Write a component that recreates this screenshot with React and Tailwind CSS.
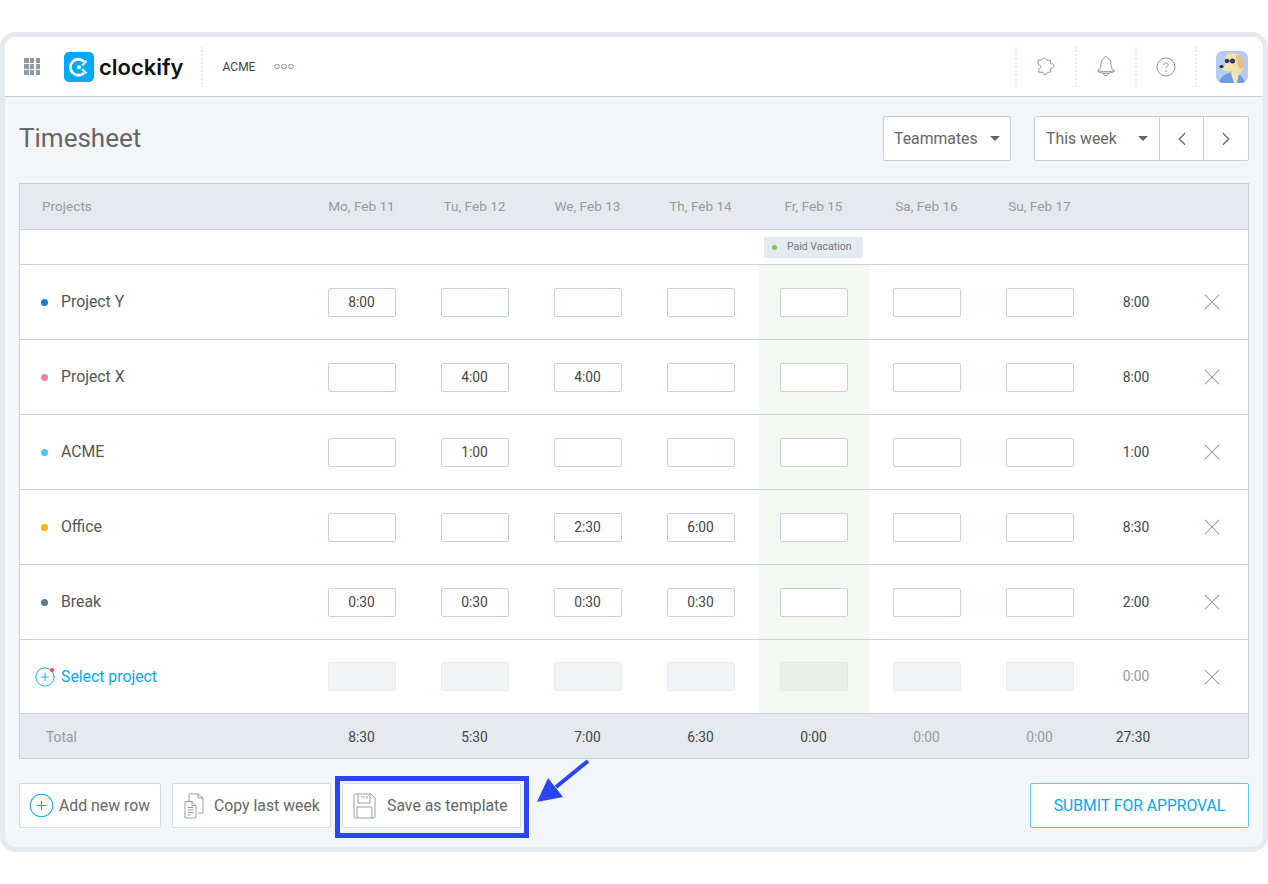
import React from 'react';
import { ChevronLeft, ChevronRight, X, CirclePlus } from 'lucide-react';

const days = ['Mo, Feb 11', 'Tu, Feb 12', 'We, Feb 13', 'Th, Feb 14', 'Fr, Feb 15', 'Sa, Feb 16', 'Su, Feb 17'];

const rows = [
  { name: 'Project Y', dot: 'bg-[#0b83d9]', hours: ['8:00', '', '', '', '', '', ''], total: '8:00' },
  { name: 'Project X', dot: 'bg-[#f27ea5]', hours: ['', '4:00', '4:00', '', '', '', ''], total: '8:00' },
  { name: 'ACME', dot: 'bg-[#4fc3f7]', hours: ['', '1:00', '', '', '', '', ''], total: '1:00' },
  { name: 'Office', dot: 'bg-[#ffb300]', hours: ['', '', '2:30', '6:00', '', '', ''], total: '8:30' },
  { name: 'Break', dot: 'bg-[#607d8b]', hours: ['0:30', '0:30', '0:30', '0:30', '', '', ''], total: '2:00' },
];

const totals = ['8:30', '5:30', '7:00', '6:30', '0:00', '0:00', '0:00'];

const gridCols = 'grid grid-cols-[285px_repeat(7,113px)_80px_1fr]';

const Separator = () => <div className="h-10 border-l-2 border-dotted border-[#e8ecef]" />;

const Caret = () => <span className="h-0 w-0 border-x-[5px] border-t-[5px] border-x-transparent border-t-[#666]" />;

const Logo = () => (
  <div className="flex items-center gap-[5px]">
    <svg width="30" height="30" viewBox="0 0 30 30">
      <rect width="30" height="30" rx="5" fill="#03a9f4" />
      <path d="M20 9.500a8 8 0 1 0 0 11.500" fill="none" stroke="#fff" strokeWidth="2.800" />
      <circle cx="15" cy="15.200" r="2" fill="#fff" />
      <path d="M18 13.500l4.500-4.500M18 17l4.500 4.500" stroke="#cdeffd" strokeWidth="2.400" />
    </svg>
    <span className="font-['Inter',sans-serif] text-[22px] font-semibold leading-none text-[#111]">clockify</span>
  </div>
);

const PuzzleIcon = () => (
  <svg width="20" height="20" viewBox="0 0 20 20" fill="none" stroke="#8a9699" strokeWidth="1">
    <path d="M2 3h3.800c.8 0 .5-.8 1-1.300 1-1 3-.8 3.500.3.300.7-.1 1.300.7 1.300h3.700v3c0 .8.800.4 1.500.5 1.800.3 2.400 2.700 1.100 3.800-.8.700-2.600.1-2.600 1v3.600h-3.200c-.8 0-.3.800-.7 1.400-.8 1.200-3 1.300-3.700.1-.4-.7.100-1.500-.7-1.500H2.800v-3c0-.8.700-.4 1.200-.8 1-.9.900-2.600-.2-3.300C3.200 7.700 2 8 2 7.300z" />
  </svg>
);

const BellIcon = () => (
  <svg width="20" height="23" viewBox="0 0 20 23" fill="none" stroke="#8a9699" strokeWidth="1">
    <path d="M10 1.500c-.9 0-1.400.7-1.400 1.500C5.800 4 5 6.500 5 9.500c0 3-1.200 5-3.500 6.500 1.300 1.500 4.600 2.200 8.500 2.200s7.200-.7 8.500-2.200C16.200 14.500 15 12.500 15 9.500c0-3-.8-5.500-3.600-6.500 0-.8-.5-1.500-1.400-1.500z" />
    <path d="M7.500 18.200c.2 1.500 1.200 2.400 2.500 2.400s2.300-.9 2.500-2.400M1.800 15.500c2 1.500 14.400 1.500 16.400 0" />
  </svg>
);

const HelpIcon = () => (
  <svg width="20" height="20" viewBox="0 0 20 20" fill="none" stroke="#8a9699" strokeWidth="1">
    <circle cx="10" cy="10" r="9" />
    <path d="M7.800 8c0-1.300 1-2.100 2.200-2.100s2.200.8 2.200 2c0 1.600-2.200 1.700-2.200 3.500" />
    <circle cx="10" cy="14" r="0.400" />
  </svg>
);

const Avatar = () => (
  <svg width="32" height="32" viewBox="0 0 32 32" className="rounded-[7px]">
    <rect width="32" height="32" fill="#b5cbf0" />
    <path d="M3 32c1-6 6-10 13-10s12 4 13 10z" fill="#6f9de8" />
    <path d="M15 22l3 10h3l2-10z" fill="#f6e8bd" />
    <path d="M11 3.500c5-2.500 13-1.500 14.500 4 1 4 2.500 9 .5 12-1 3-3.500 5-7 5-2 0-3-2-3-4.500-3 1-7 .5-9.500-1.500-1-1.500 0-3 2.500-3.500.5-1 0-2.500 0-4 0-3 .5-6 2-7.500z" fill="#f5e2ab" />
    <path d="M20 4c4-.5 7.500 4 7.500 9 0 3.500-2 5.500-3.500 5-2.500-3-4-9-4-14z" fill="#e0c283" />
    <circle cx="11" cy="10" r="2.200" fill="#2a3558" />
    <circle cx="16.500" cy="10" r="2.500" fill="#2a3558" />
    <path d="M13 10h2" stroke="#2a3558" strokeWidth="1" />
    <ellipse cx="5.500" cy="15.500" rx="2" ry="1.500" fill="#222" />
  </svg>
);

const Header = () => (
  <header className="flex h-[60px] shrink-0 items-center border-b border-[#c6d2d9] bg-white">
    <div className="ml-[19px] grid w-[16px] grid-cols-3 gap-[1.500px]">
      {Array.from({ length: 9 }).map((_, i) => (
        <span key={i} className="h-[4.500px] w-[4.500px] bg-[#8b9aa3]" />
      ))}
    </div>
    <div className="ml-[24px]"><Logo /></div>
    <div className="ml-[17px]"><Separator /></div>
    <span className="ml-[20px] text-[12px] text-[#444]">ACME</span>
    <div className="ml-[19px] flex gap-[1.500px]">
      {[0, 1, 2].map((i) => (
        <span key={i} className="h-[5.500px] w-[5.500px] rounded-full border border-[#8a9699]" />
      ))}
    </div>
    <div className="ml-auto flex items-center">
      <Separator />
      <div className="flex w-[58px] justify-center"><PuzzleIcon /></div>
      <Separator />
      <div className="flex w-[58px] justify-center"><BellIcon /></div>
      <Separator />
      <div className="flex w-[58px] justify-center"><HelpIcon /></div>
      <Separator />
      <div className="ml-[19px] mr-[15px]"><Avatar /></div>
    </div>
  </header>
);

const Toolbar = () => (
  <div className="flex items-center justify-between pl-[14px] pr-[14px] pt-[19px]">
    <h1 className="mb-[2px] text-[26px] font-normal leading-none text-[#666]">Timesheet</h1>
    <div className="flex">
      <button className="flex h-[45px] w-[128px] items-center justify-between rounded-[2px] border border-[#c6d2d9] bg-white pl-[10px] pr-[10px] text-[15.800px] text-[#666]">
        Teammates <Caret />
      </button>
      <div className="ml-[23px] flex h-[45px] rounded-[2px] border border-[#c6d2d9] bg-white text-[15.800px] text-[#666]">
        <button className="flex w-[124px] items-center justify-between pl-[11px] pr-[11px]">This week <Caret /></button>
        <button className="flex w-[44px] items-center justify-center border-l border-[#c6d2d9]"><ChevronLeft size={22} strokeWidth={1.300} /></button>
        <button className="flex w-[45px] items-center justify-center border-l border-[#c6d2d9]"><ChevronRight size={22} strokeWidth={1.300} /></button>
      </div>
    </div>
  </div>
);

const TimeInput = ({ value, disabled, shaded }) => {
  let tone = 'border-[#c6d2d9] bg-white';
  if (disabled) tone = shaded ? 'border-[#e2e8e2] bg-[#ebf0ea]' : 'border-[#e8ecef] bg-[#f2f5f7]';
  return (
    <div className={`flex h-[29px] w-[68px] items-center justify-center rounded-[2px] border text-[13.800px] text-[#444] ${tone}`}>
      {value}
    </div>
  );
};

const DayCell = ({ index, children }) => (
  <div className="flex justify-center">
    <div className={`flex w-[110px] items-center justify-center ${index === 4 ? 'bg-[#f3f9f0]' : ''}`}>{children}</div>
  </div>
);

const Row = ({ row }) => (
  <div className={`${gridCols} h-[75px] border-b border-[#c6d2d9] bg-white`}>
    <div className="flex items-center pl-[21px] text-[15.800px] text-[#555]">
      <span className={`mr-[13px] h-[7px] w-[7px] rounded-full ${row.dot}`} />
      {row.name}
    </div>
    {row.hours.map((h, i) => (
      <DayCell key={i} index={i}><TimeInput value={h} /></DayCell>
    ))}
    <div className="flex items-center justify-center text-[13.800px] text-[#444]">{row.total}</div>
    <div className="flex items-center justify-center"><X size={28} strokeWidth={0.900} color="#8a9699" /></div>
  </div>
);

const Table = () => (
  <div className="mt-[22px] ml-[14px] mr-[14px] border border-[#c6d2d9]">
    <div className={`${gridCols} h-[46px] border-b border-[#c6d2d9] bg-[#e4eaf0] text-[13.600px] text-[#999]`}>
      <div className="flex items-center pl-[22px]">Projects</div>
      {days.map((d) => (
        <div key={d} className="flex items-center justify-center">{d}</div>
      ))}
    </div>
    <div className={`${gridCols} h-[35px] border-b border-[#c6d2d9] bg-white`}>
      <div />
      {days.map((d, i) => (
        <div key={d} className="flex items-center justify-center">
          {i === 4 && (
            <span className="flex h-[21px] w-[99px] items-center rounded-[2px] bg-[#e4eaf0] pl-[8px] text-[10.500px] text-[#777]">
              <span className="mr-[10px] h-[5px] w-[5px] rounded-full bg-[#8bc34a]" />
              Paid Vacation
            </span>
          )}
        </div>
      ))}
    </div>
    {rows.map((r) => (
      <Row key={r.name} row={r} />
    ))}
    <div className={`${gridCols} h-[74px] border-b border-[#c6d2d9] bg-white`}>
      <div className="flex items-center pl-[14px] text-[15.800px] text-[#03a9f4]">
        <span className="relative mr-[5px] flex">
          <CirclePlus size={22} strokeWidth={1} color="#03a9f4" />
          <span className="absolute right-[2px] top-[2px] h-[4px] w-[4px] rounded-full bg-[#f44336]" />
        </span>
        Select project
      </div>
      {days.map((d, i) => (
        <DayCell key={d} index={i}><TimeInput disabled shaded={i === 4} /></DayCell>
      ))}
      <div className="flex items-center justify-center text-[13.800px] text-[#999]">0:00</div>
      <div className="flex items-center justify-center"><X size={28} strokeWidth={0.900} color="#8a9699" /></div>
    </div>
    <div className={`${gridCols} h-[44px] bg-[#e4eaf0] pt-[2px] text-[13.800px] text-[#444]`}>
      <div className="flex items-center pl-[26px] text-[#999]">Total</div>
      {totals.map((t, i) => (
        <div key={i} className={`flex items-center justify-center ${i > 4 ? 'text-[#999]' : ''}`}>{t}</div>
      ))}
      <div className="flex items-center justify-center pr-[6px]">27:30</div>
      <div />
    </div>
  </div>
);

const CopyIcon = () => (
  <svg width="20" height="26" viewBox="0 0 20 26" fill="none" stroke="#8a9699" strokeWidth="0.900">
    <path d="M1 8.500h7l4 4V25H1z" />
    <path d="M8 8.500v4h4M3.500 14.500h6M3.500 17h6M3.500 19.500h6M3.500 22h3" />
    <path d="M5 8.500V1h9.500M14 1l5 4v15h-5M14 1v4h5" />
  </svg>
);

const SaveIcon = () => (
  <svg width="23" height="26" viewBox="0 0 23 26" fill="none" stroke="#8a9699" strokeWidth="0.900">
    <path d="M2.500 1H18l4 4v18.500a1.500 1.500 0 0 1-1.500 1.500h-18A1.500 1.500 0 0 1 1 23.500v-21A1.500 1.500 0 0 1 2.500 1z" />
    <path d="M5 1v9h12V1M4 25V14h15v11M8 4h4M14 3v3" />
  </svg>
);

const Footer = () => (
  <div className="flex items-center justify-between pl-[14px] pr-[14px] pt-[24px]">
    <div className="flex gap-[11px] text-[15.800px] text-[#666]">
      <button className="flex h-[45px] w-[142px] items-center rounded-[2px] border border-[#d3dce1] bg-white pl-[8px]">
        <CirclePlus size={27} strokeWidth={0.900} color="#03a9f4" className="mr-[4px]" /> Add new row
      </button>
      <button className="flex h-[45px] w-[159px] items-center rounded-[2px] border border-[#d3dce1] bg-white pl-[11px]">
        <span className="mr-[10px] flex"><CopyIcon /></span> Copy last week
      </button>
      <div className="relative">
        <button className="flex h-[45px] w-[179px] items-center rounded-[2px] border border-[#d3dce1] bg-white pl-[10px]">
          <span className="mr-[11px] flex"><SaveIcon /></span> Save as template
        </button>
        <span className="absolute -bottom-[10px] -left-[7px] -right-[8px] -top-[7px] border-[5px] border-[#2b45f5]" />
        <svg width="60" height="50" viewBox="0 0 60 50" className="absolute -top-[25px] left-[192px]">
          <path d="M54 3L22 29" stroke="#2b45f5" strokeWidth="4" />
          <path d="M3 44L14 20L29 39z" fill="#2b45f5" />
        </svg>
      </div>
    </div>
    <button className="h-[45px] w-[219px] rounded-[2px] border-[1.500px] border-[#5cc6f5] bg-white text-[15.700px] text-[#03a9f4]">SUBMIT FOR APPROVAL</button>
  </div>
);

export default function App() {
  return (
    <div className="h-[884px] w-[1268px] bg-white pt-[32px] font-['Roboto',sans-serif]">
      <div className="flex h-[820px] flex-col overflow-hidden rounded-[16px] border-[5px] border-[#e4eaf0] bg-[#f2f6f8]">
        <Header />
        <Toolbar />
        <Table />
        <Footer />
      </div>
    </div>
  );
}
